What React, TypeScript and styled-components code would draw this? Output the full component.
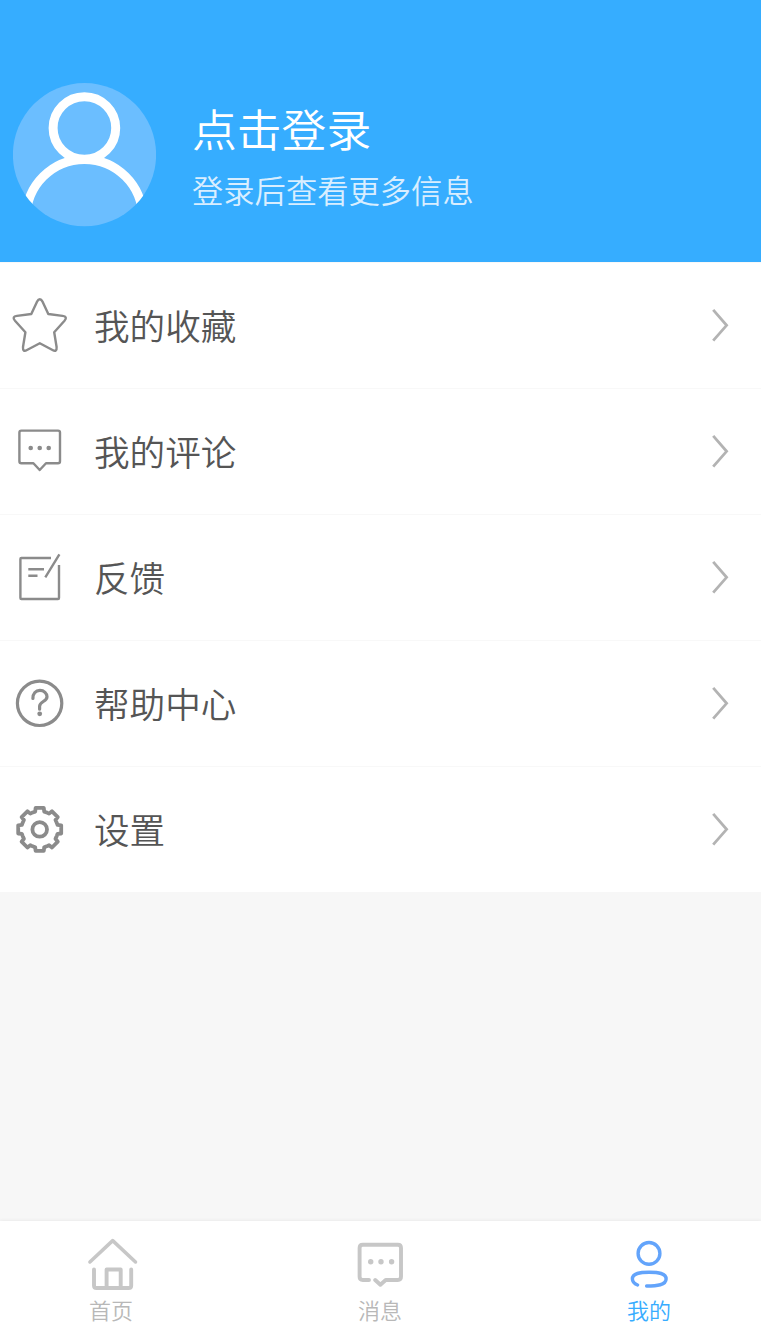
import React from "react";
import styled, { createGlobalStyle } from "styled-components";

const GlobalStyle = createGlobalStyle`
  body {
    margin: 0;
    background: #f7f7f7;
    font-family: "Noto Sans CJK SC", "Noto Sans", sans-serif;
    font-weight: 350;
  }
`;

const Page = styled.div`
  display: flex;
  flex-direction: column;
  height: 1339px;
  overflow: hidden;
  background: #f7f7f7;
`;

const Header = styled.header`
  flex: none;
  display: flex;
  align-items: flex-start;
  box-sizing: border-box;
  height: 262px;
  padding: 83px 13px 0;
  background: #36adff;
`;

const Avatar = styled.svg`
  flex: none;
  width: 143px;
  height: 144px;
`;

const Greeting = styled.div`
  display: flex;
  flex-direction: column;
  margin: 13px 0 0 36px;
`;

const Title = styled.div`
  font-size: 44.8px;
  line-height: 64px;
  color: #fff;
`;

const Subtitle = styled.div`
  font-size: 31.3px;
  line-height: 60px;
  color: #d9eeff;
`;

const Menu = styled.nav`
  flex: none;
  background: #fff;
`;

const Row = styled.a`
  display: flex;
  align-items: center;
  box-sizing: border-box;
  height: 126px;
  padding: 0 32px 0 13px;
  box-shadow: inset 0 1px 0 #f8f8f8;
`;

const RowIcon = styled.svg`
  flex: none;
  width: 54px;
  height: 54px;
  overflow: visible;
  fill: none;
  stroke: #8b8b8b;
  stroke-width: 2.4;
  stroke-linecap: round;
  stroke-linejoin: round;
`;

const RowLabel = styled.span`
  flex: 1;
  margin-left: 27px;
  font-size: 35.6px;
  line-height: 52px;
  color: #555;
`;

const Chevron = styled.svg`
  width: 18px;
  height: 34px;
  fill: none;
  stroke: #b3b3b3;
  stroke-width: 2.8;
`;

const TabBar = styled.footer`
  flex: none;
  display: flex;
  justify-content: space-between;
  box-sizing: border-box;
  height: 118px;
  margin-top: auto;
  padding: 16px 85px 0 84px;
  background: #fff;
  box-shadow: 0 -1px 3px rgba(0, 0, 0, 0.05);
`;

const Tab = styled.a<{ $active?: boolean }>`
  display: flex;
  flex-direction: column;
  align-items: center;
  width: 54px;
  color: ${(p) => (p.$active ? "#37acff" : "#b8b8b8")};
  stroke: ${(p) => (p.$active ? "#63a4fb" : "#c7c7c7")};
`;

const TabIcon = styled.svg`
  width: 54px;
  height: 54px;
  fill: none;
  stroke-width: 3.9;
  stroke-linecap: round;
  stroke-linejoin: round;
`;

const TabLabel = styled.span`
  font-size: 22px;
  line-height: 32px;
  margin-top: 2px;
  white-space: nowrap;
  stroke: none;
`;

const gearPath = (() => {
  const tooth = [[-6.2, -17.2], [-4.5, -17.8], [-4.1, -21.5], [4.1, -21.5], [4.5, -17.8], [6.2, -17.2]];
  const points: string[] = [];
  for (let i = 0; i < 8; i++) {
    const a = (i * Math.PI) / 4;
    for (const [x, y] of tooth) {
      const px = 26.7 + x * Math.cos(a) - y * Math.sin(a);
      const py = 27.4 + x * Math.sin(a) + y * Math.cos(a);
      points.push(`${px.toFixed(2)} ${py.toFixed(2)}`);
    }
  }
  return `M${points.join("L")}Z`;
})();

const menuItems = [
  {
    label: "我的收藏",
    icon: (
      <path d="M23.9 3.9Q26.8 -1.3 29.7 3.9L35.3 16L49.5 17.9Q55 18.7 51.5 22.8L41.2 34.3L43.6 49Q44 54.5 39.5 52L26.8 45.3L14 52Q9.6 54.5 10 49L12.4 34.3L2 22.8Q-1.5 18.7 4 17.9L18.3 16Z" />
    ),
  },
  {
    label: "我的评论",
    icon: (
      <>
        <path d="M8.4 6.6H45Q47 6.6 47 8.6V37.2Q47 39.2 45 39.2H33L26.7 46L20.4 39.2H8.4Q6.4 39.2 6.4 37.2V8.6Q6.4 6.6 8.4 6.6Z" />
        <g fill="#8b8b8b" stroke="none">
          <circle cx="17.7" cy="24" r="2.3" />
          <circle cx="26.7" cy="24" r="2.3" />
          <circle cx="35.7" cy="24" r="2.3" />
        </g>
      </>
    ),
  },
  {
    label: "反馈",
    icon: (
      <g strokeLinecap="butt">
        <path d="M38 8H8.4Q7.4 8 7.4 9V48Q7.4 49 8.4 49H45Q46 49 46 48V15M32.3 27.4L46.4 4.4M15.3 19.3H31M15.3 25.8H24.5" />
      </g>
    ),
  },
  {
    label: "帮助中心",
    icon: (
      <g strokeWidth="3.2">
        <circle cx="26.6" cy="27.3" r="22.2" />
        <path d="M19.9 22.5C19.9 17.2 22.8 14.4 26.9 14.4C31 14.4 34 17.4 34 20.7C34 25.6 26.6 25.4 26.6 30.2V33.2" />
        <circle cx="26.7" cy="37.8" r="2.4" fill="#8b8b8b" stroke="none" />
      </g>
    ),
  },
  {
    label: "设置",
    icon: (
      <g strokeWidth="3.8">
        <path d={gearPath} />
        <circle cx="26.7" cy="27.4" r="7.3" />
      </g>
    ),
  },
];

export default function App() {
  return (
    <>
      <GlobalStyle />
      <Page>
        <Header>
          <Avatar viewBox="0 0 143 144">
            <clipPath id="avatar-clip">
              <circle cx="71.5" cy="71.7" r="71.6" />
            </clipPath>
            <g clipPath="url(#avatar-clip)" fill="none" stroke="#fff" strokeWidth="9">
              <rect width="143" height="144" fill="#6bbeff" stroke="none" />
              <circle cx="71.4" cy="45" r="31.3" />
              <circle cx="71.4" cy="134.5" r="58.1" />
            </g>
          </Avatar>
          <Greeting>
            <Title>点击登录</Title>
            <Subtitle>登录后查看更多信息</Subtitle>
          </Greeting>
        </Header>
        <Menu>
          {menuItems.map((item) => (
            <Row key={item.label}>
              <RowIcon viewBox="0 0 54 54">{item.icon}</RowIcon>
              <RowLabel>{item.label}</RowLabel>
              <Chevron viewBox="0 0 18 34">
                <path d="M2.2 1.9L15.6 17.3L2.2 32.7" />
              </Chevron>
            </Row>
          ))}
        </Menu>
        <TabBar>
          <Tab>
            <TabIcon viewBox="0 0 54 54">
              <path strokeWidth="3.5" d="M5.9 25L28.7 3.6L51.5 25" />
              <path d="M10 32.4V48.4Q10 51 12.6 51H44.6Q47.2 51 47.2 48.4V32.4M22.6 51V32.5H36.7V51" />
            </TabIcon>
            <TabLabel>首页</TabLabel>
          </Tab>
          <Tab>
            <TabIcon viewBox="0 0 54 54">
              <path d="M16 43H9.8Q6.6 43 6.6 39.8V11Q6.6 7.8 9.8 7.8H44.8Q48 7.8 48 11V39.8Q48 43 44.8 43H32.7L27.4 47.7L22.2 43" />
              <g fill="#c7c7c7" stroke="none">
                <circle cx="17.7" cy="24.7" r="2.7" />
                <circle cx="28" cy="24.7" r="2.7" />
                <circle cx="38.6" cy="24.7" r="2.7" />
              </g>
            </TabIcon>
            <TabLabel>消息</TabLabel>
          </Tab>
          <Tab $active>
            <TabIcon viewBox="0 0 54 54">
              <g strokeWidth="3.4">
                <circle cx="27" cy="16.4" r="10.9" />
                <path d="M15.6 48C12.5 46.8 10.4 44.6 10.4 42C10.4 36 18 35.3 27.2 35.3C36.5 35.3 44.1 36 44.1 42C44.1 48 35 49 24.6 49" />
              </g>
            </TabIcon>
            <TabLabel>我的</TabLabel>
          </Tab>
        </TabBar>
      </Page>
    </>
  );
}
